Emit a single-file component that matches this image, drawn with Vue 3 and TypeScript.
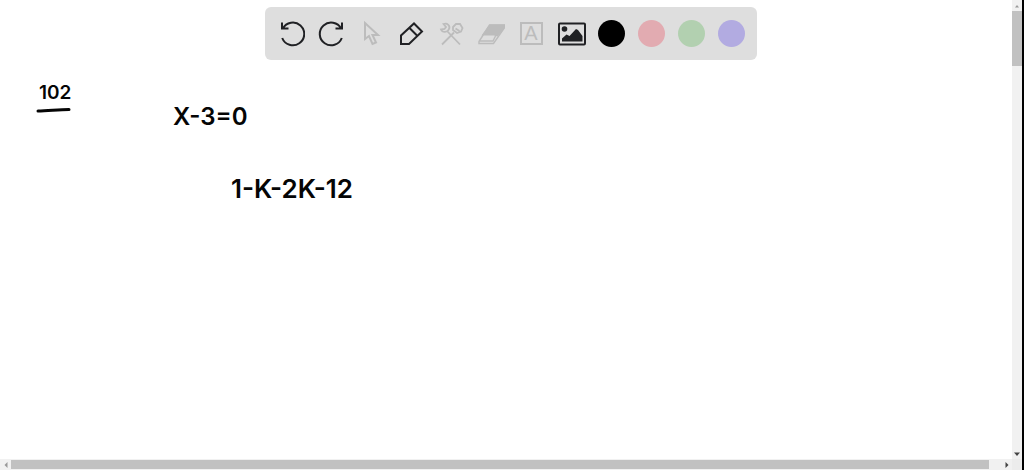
<script setup lang="ts">
import { ref } from 'vue'

interface Swatch {
  name: string
  tone: string
}

const swatches: Swatch[] = [
  { name: 'Black', tone: 'black' },
  { name: 'Pink', tone: 'pink' },
  { name: 'Green', tone: 'green' },
  { name: 'Purple', tone: 'purple' },
]

const tool = ref('pen')
const color = ref('black')
</script>

<template>
  <main class="board">
    <div class="toolbar" role="toolbar" aria-label="Drawing tools">
      <button class="tool" type="button" aria-label="Undo">
        <svg viewBox="0 0 28 28">
          <path d="M5 2.500v6h6.500M5.800 8.500A11.400 11.400 0 1 1 5.200 18" />
        </svg>
      </button>
      <button class="tool" type="button" aria-label="Redo">
        <svg viewBox="0 0 28 28">
          <path d="M25 2.500v6h-6.500M24.200 8.500A11.400 11.400 0 1 0 24.800 18" />
        </svg>
      </button>
      <button class="tool faded" type="button" aria-label="Select" @click="tool = 'select'">
        <svg viewBox="0 0 28 28">
          <path d="M8 3v16l4-3 3.500 8 3.500-1.500-3.500-7.500H21z" />
        </svg>
      </button>
      <button class="tool" type="button" aria-label="Pen" :aria-pressed="tool === 'pen'" @click="tool = 'pen'">
        <svg viewBox="0 0 28 28">
          <path d="M4 24v-8.500L17 3.500l8 8L12 24zM12.500 8l8 8" />
        </svg>
      </button>
      <button class="tool faded" type="button" aria-label="Tools" @click="tool = 'tools'">
        <svg viewBox="0 0 28 28" class="fine">
          <path d="M10.500 11.500L23 24.500M6.500 4c4-1.500 7 2 5.500 5-1.500 3.500-6.500 4-8 .5l3.500-.5 1.500-2z" />
          <path d="M5 24.500L17 12.500M16 7l3-3h4l2.500 4-1.500 3.500-4 1.500-4-3zM18.500 8.500l4 2.500" />
        </svg>
      </button>
      <button class="tool faded" type="button" aria-label="Eraser" @click="tool = 'eraser'">
        <svg viewBox="0 0 28 28">
          <path class="solid" d="M12.500 4.500h16v2.500l-8 9.500L17 15.500H4.500z" />
          <path class="thin" d="M12.500 5h15.500v2L16.500 23.500H2v-2zM2.500 21h13.500l3-6" />
        </svg>
      </button>
      <button class="tool faded" type="button" aria-label="Text" @click="tool = 'text'">
        <span class="letter">A</span>
      </button>
      <button class="tool" type="button" aria-label="Image" @click="tool = 'image'">
        <svg viewBox="0 0 28 28" class="picture">
          <rect x="2" y="3.500" width="26" height="21" rx="1" />
          <circle class="solid" cx="7.500" cy="9" r="2.800" />
          <path class="solid" d="M5 21.500v-3l4.500-4 3 1.500L19 9l2 1 4.500 6v5.500z" />
        </svg>
      </button>
      <button
        v-for="s in swatches"
        :key="s.tone"
        class="tool"
        type="button"
        :aria-label="s.name"
        :aria-pressed="color === s.tone"
        @click="color = s.tone"
      >
        <span class="swatch" :class="s.tone"></span>
      </button>
    </div>

    <section class="canvas" aria-label="Whiteboard">
      <p class="note title">102</p>
      <svg class="underline" viewBox="0 0 36 6" aria-hidden="true">
        <path d="M2 4C12 4 22 2.500 33 2.500" />
      </svg>
      <p class="note first">X-3=0</p>
      <p class="note second">1-K-2K-12</p>
    </section>

    <div class="scroll vertical" aria-hidden="true">
      <span class="arrow"><svg viewBox="0 0 6 4"><path d="M1 3.500L3 1l2 2.500z" /></svg></span>
      <span class="track"><span class="thumb"></span></span>
      <span class="arrow dark"><svg viewBox="0 0 6 4"><path d="M0 .5h6L3 4z" /></svg></span>
    </div>
    <div class="scroll horizontal" aria-hidden="true">
      <span class="arrow"><svg viewBox="0 0 4 6"><path d="M3.500 0v6L.5 3z" /></svg></span>
      <span class="track"><span class="thumb"></span></span>
      <span class="arrow dark"><svg viewBox="0 0 4 6"><path d="M.5 0v6l3-3z" /></svg></span>
    </div>
    <div class="corner"></div>
  </main>
</template>

<style>
body {
  margin: 0;
  background: #fff;
}
</style>

<style scoped>
.board {
  position: relative;
  box-sizing: border-box;
  height: 100vh;
  display: grid;
  grid-template-columns: 1fr 10px;
  grid-template-rows: 1fr 11px;
  border-right: 2px solid #000;
  background: #fff;
  font-family: Inter, "Liberation Sans", sans-serif;
  overflow: hidden;
}
.toolbar {
  position: absolute;
  z-index: 1;
  top: 7px;
  left: 50%;
  transform: translateX(-50%);
  display: flex;
  align-items: center;
  box-sizing: border-box;
  height: 53px;
  padding: 0 6px;
  border-radius: 6px;
  background: #dedede;
}
.tool {
  width: 40px;
  height: 40px;
  padding: 0;
  border: 0;
  background: none;
  color: #202124;
  display: flex;
  align-items: center;
  justify-content: center;
  cursor: pointer;
}
.tool svg {
  width: 28px;
  height: 28px;
  fill: none;
  stroke: currentColor;
  stroke-width: 2;
}
.tool .picture {
  overflow: visible;
}
.tool .fine {
  stroke-width: 1.8;
}
.tool .thin {
  stroke-width: 1.4;
}
.tool .solid {
  fill: currentColor;
  stroke: none;
}
.faded {
  color: #bcbcbc;
}
.letter {
  box-sizing: border-box;
  width: 23px;
  height: 23px;
  border: 2px solid currentColor;
  font: 20px/19px "Liberation Sans", sans-serif;
  text-align: center;
}
.swatch {
  width: 27px;
  height: 27px;
  border-radius: 50%;
}
.black {
  background: #000;
}
.pink {
  background: #e2abb1;
}
.green {
  background: #b2d0b0;
}
.purple {
  background: #b2abe1;
}
.canvas {
  position: relative;
}
.note {
  position: absolute;
  margin: 0;
  color: #050505;
  font-size: 24px;
  font-weight: 600;
  line-height: 32px;
  white-space: nowrap;
}
.title {
  left: 39px;
  top: 77px;
  font-size: 19px;
}
.first {
  left: 173px;
  top: 101px;
}
.second {
  left: 231px;
  top: 173px;
  font-size: 26px;
}
.underline {
  position: absolute;
  left: 36px;
  top: 107px;
  width: 36px;
  height: 6px;
  fill: none;
  stroke: #050505;
  stroke-width: 3;
  stroke-linecap: round;
}
.scroll {
  display: flex;
  background: #f1f1f1;
}
.vertical {
  flex-direction: column;
}
.arrow {
  flex: 0 0 11px;
  display: flex;
  align-items: center;
  justify-content: center;
}
.arrow svg {
  width: 6px;
  height: 4px;
  fill: #999;
}
.horizontal .arrow svg {
  width: 4px;
  height: 6px;
}
.arrow.dark svg {
  fill: #444;
}
.track {
  flex: 1;
  display: flex;
  flex-direction: inherit;
}
.thumb {
  background: #c1c1c1;
}
.vertical .thumb {
  height: 12.600%;
}
.horizontal .thumb {
  width: 98.800%;
  margin: 1px 0;
}
.corner {
  background: #ececec;
}
</style>
